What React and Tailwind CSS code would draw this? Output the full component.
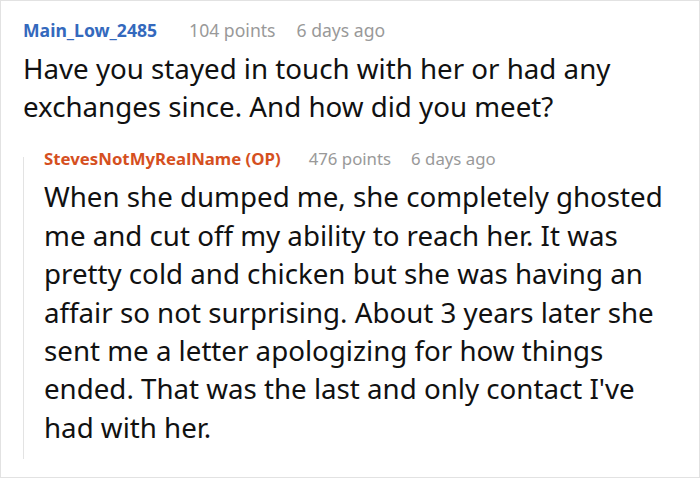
const comments = {
  author: 'Main_Low_2485',
  points: 104,
  age: '6 days ago',
  body: 'Have you stayed in touch with her or had any exchanges since. And how did you meet?',
  reply: {
    author: 'StevesNotMyRealName (OP)',
    points: 476,
    age: '6 days ago',
    body:
      "When she dumped me, she completely ghosted me and cut off my ability to reach her. It was pretty cold and chicken but she was having an affair so not surprising. About 3 years later she sent me a letter apologizing for how things ended. That was the last and only contact I've had with her.",
  },
};

const App = () => {
  const reply = comments.reply;

  return (
    <div className="w-[700px] h-[478px] bg-white border border-[#e2e2e2] overflow-hidden font-['Noto_Sans',sans-serif]">
      <div className="pl-[22px] pr-[8px] pt-[16px]">
        {/* Top comment */}
        <div className="flex items-baseline text-[17.6px] leading-[26px]">
          <span className="font-bold text-[#3469bd]">{comments.author}</span>
          <span className="ml-[32px] text-[#999]">{comments.points} points</span>
          <span className="ml-[21px] text-[#999]">{comments.age}</span>
        </div>
        <p className="mt-[6px] text-[27.7px] leading-[38.4px] text-[#111]">{comments.body}</p>

        {/* Reply */}
        <div className="mt-[31.5px] flex flex-col border-l border-[#e3e3e3] pl-5 pb-[13px]">
          <div className="-mt-[11px] flex items-baseline text-[16.8px] leading-[26px]">
            <span className="font-bold text-[#d5501f]">{reply.author}</span>
            <span className="ml-[28px] text-[#999]">{reply.points} points</span>
            <span className="ml-[20px] text-[#999]">{reply.age}</span>
          </div>
          <p className="mt-[5px] text-[27.7px] leading-[38.4px] text-[#111]">{reply.body}</p>
        </div>
      </div>
    </div>
  );
};

export default App;
